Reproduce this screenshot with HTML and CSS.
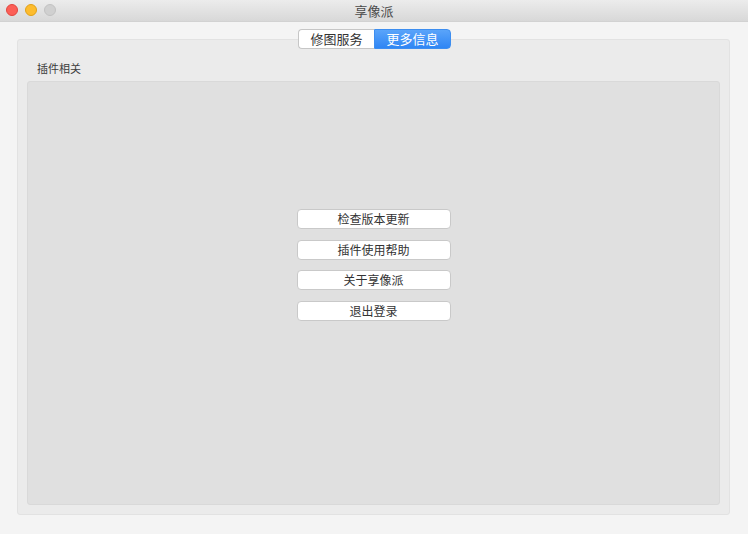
FILE: index.html
```html
<!DOCTYPE html>
<html lang="zh-CN">
<head>
    <meta charset="UTF-8">
    <meta name="viewport" content="width=device-width, initial-scale=1.0">
    <title>享像派</title>
    <link rel="stylesheet" href="styles.css">
</head>
<body>
  <div class="window">
    <div class="titlebar">
        <div class="lights">
            <span class="light red"></span>
            <span class="light yellow"></span>
            <span class="light gray"></span>
        </div>
        <div class="title">享像派</div>
    </div>
    <div class="content">
        <div class="tabs">
            <div class="tab">修图服务</div>
            <div class="tab active">更多信息</div>
        </div>
        <div class="tab-box">
            <div class="group-label">插件相关</div>
            <div class="group-box">
                <button class="btn">检查版本更新</button>
                <button class="btn">插件使用帮助</button>
                <button class="btn">关于享像派</button>
                <button class="btn">退出登录</button>
            </div>
        </div>
    </div>
  </div>
</body>
</html>
```

FILE: styles.css
```css
html, body {
    margin: 0;
    padding: 0;
}
body {
    font-family: "Noto Sans CJK SC", "Noto Sans", sans-serif;
    background-color: #f4f4f4;
    color: #333;
    width: 748px;
    height: 534px;
    overflow: hidden;
}
.titlebar {
    height: 21px;
    border-bottom: 1px solid #d2d2d2;
    background: linear-gradient(#ececec, #d8d8d8);
    display: flex;
    align-items: center;
    justify-content: center;
    position: relative;
}
.lights {
    position: absolute;
    left: 6px;
    top: 4px;
    display: flex;
    gap: 7px;
}
.light {
    width: 12px;
    height: 12px;
    border-radius: 50%;
    box-sizing: border-box;
}
.red {
    background-color: #fc5f57;
    border: 1px solid #e2463f;
}
.yellow {
    background-color: #fdbc2e;
    border: 1px solid #e1a116;
}
.gray {
    background-color: #d0d0d0;
    border: 1px solid #c2c2c2;
}
.title {
    font-size: 13px;
    color: #4a4a4a;
    line-height: 21px;
}
.content {
    padding: 0 18px 0 17px;
}
.tabs {
    display: flex;
    justify-content: center;
    margin-top: 7px;
    position: relative;
    z-index: 1;
    padding-left: 2px;
}
.tab {
    height: 18px;
    line-height: 18px;
    font-size: 13px;
    padding: 0 11px;
    width: 53px;
    text-align: center;
    background-color: #fff;
    border: 1px solid #c6c6c6;
    border-right: none;
    border-radius: 4px 0 0 4px;
    color: #333;
}
.tab.active {
    background: linear-gradient(#5aa4fa, #2f86f4);
    border: 1px solid #3d8ef0;
    border-radius: 0 4px 4px 0;
    color: #fff;
}
.tab-box {
    margin-top: -10px;
    height: 476px;
    background-color: #ebebeb;
    border: 1px solid #e2e2e2;
    border-radius: 3px;
    padding: 0 9px;
    box-sizing: border-box;
}
.group-label {
    font-size: 11px;
    color: #3c3c3c;
    line-height: 14px;
    margin: 21px 0 6px 10px;
}
.group-box {
    height: 424px;
    box-sizing: border-box;
    background-color: #e0e0e0;
    border: 1px solid #d9d9d9;
    border-radius: 3px;
    display: flex;
    flex-direction: column;
    align-items: center;
    gap: 10.5px;
    padding-top: 127px;
}
.btn {
    width: 154px;
    height: 20px;
    font-family: inherit;
    font-size: 12px;
    color: #333;
    background-color: #fff;
    border: 1px solid #c9c9c9;
    border-radius: 4px;
    padding: 0;
    line-height: 18px;
}
```
